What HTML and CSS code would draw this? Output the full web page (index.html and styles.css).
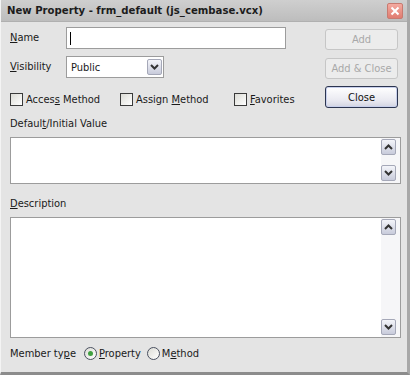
FILE: index.html
```html
<!DOCTYPE html>
<html lang="en">
<head>
    <meta charset="UTF-8">
    <title>New Property</title>
    <link rel="stylesheet" href="styles.css">
</head>
<body>
    <div class="window">
        <div class="titlebar">
            <span class="title">New Property - frm_default (js_cembase.vcx)</span>
            <span class="close-box">
                <svg width="10" height="10" viewBox="0 0 10 10"><path d="M1.5 1.5 L8.5 8.5 M8.5 1.5 L1.5 8.5" stroke="#fff" stroke-width="2"/></svg>
            </span>
        </div>

        <div class="content">
            <div class="top">
                <div class="fields">
                    <div class="row">
                        <label class="lbl"><u>N</u>ame</label>
                        <div class="textbox name-box"><span class="caret"></span></div>
                    </div>
                    <div class="row">
                        <label class="lbl"><u>V</u>isibility</label>
                        <div class="textbox combo">
                            <span class="combo-text">Public</span>
                            <span class="sbtn combo-btn">
                                <svg width="9" height="6" viewBox="0 0 9 6"><path d="M1 1 L4.5 4.5 L8 1" stroke="#333" stroke-width="2" fill="none"/></svg>
                            </span>
                        </div>
                    </div>
                    <div class="row checks">
                        <label class="check"><span class="box"></span><span>Acces<u>s</u> Method</span></label>
                        <label class="check"><span class="box"></span><span>Assign <u>M</u>ethod</span></label>
                        <label class="check"><span class="box"></span><span><u>F</u>avorites</span></label>
                    </div>
                </div>
                <div class="buttons">
                    <button class="btn" disabled>Add</button>
                    <button class="btn" disabled>Add &amp; Close</button>
                    <button class="btn default">Close</button>
                </div>
            </div>

            <div class="section-label">Defaul<u>t</u>/Initial Value</div>
            <div class="memo memo-small">
                <div class="scroll">
                    <span class="sbtn"><svg width="9" height="6" viewBox="0 0 9 6"><path d="M1 5 L4.5 1.5 L8 5" stroke="#333" stroke-width="2" fill="none"/></svg></span>
                    <span class="sbtn"><svg width="9" height="6" viewBox="0 0 9 6"><path d="M1 1 L4.5 4.5 L8 1" stroke="#333" stroke-width="2" fill="none"/></svg></span>
                </div>
            </div>

            <div class="section-label desc-label"><u>D</u>escription</div>
            <div class="memo memo-large">
                <div class="scroll">
                    <span class="sbtn"><svg width="9" height="6" viewBox="0 0 9 6"><path d="M1 5 L4.5 1.5 L8 5" stroke="#333" stroke-width="2" fill="none"/></svg></span>
                    <span class="sbtn"><svg width="9" height="6" viewBox="0 0 9 6"><path d="M1 1 L4.5 4.5 L8 1" stroke="#333" stroke-width="2" fill="none"/></svg></span>
                </div>
            </div>

            <div class="member">
                <span class="member-label">Member ty<u>p</u>e</span>
                <label class="radio"><span class="dot checked"></span><span><u>P</u>roperty</span></label>
                <label class="radio"><span class="dot"></span><span>M<u>e</u>thod</span></label>
            </div>
        </div>
    </div>
</body>
</html>
```

FILE: styles.css
```css
/* Dialog window */
body {
    margin: 0;
    padding: 0;
    background-color: #e4e4e4;
    font-family: "DejaVu Sans Condensed", "DejaVu Sans", sans-serif;
    font-size: 11px;
    color: #1a1a1a;
}

.window {
    width: 410px;
    height: 375px;
    box-sizing: border-box;
    border-left: 1px solid #f4f4f4;
    border-right: 3px solid #a8a8a8;
    border-bottom: 3px solid #8c8c8c;
    background-color: #e4e4e4;
    display: flex;
    flex-direction: column;
    overflow: hidden;
}

u {
    text-decoration: underline;
    text-underline-offset: 1px;
}

/* Title bar */
.titlebar {
    flex-shrink: 0;
    height: 21px;
    display: flex;
    align-items: center;
    justify-content: space-between;
    padding: 0 4px 0 6px;
    background: linear-gradient(#cfcfcf, #bdbdbd);
    border-bottom: 1px solid #b0b0b0;
}

.title {
    font-weight: bold;
    font-size: 11.25px;
    color: #1c1c1c;
}

.close-box {
    width: 14px;
    height: 14px;
    border: 1px solid #c87a70;
    border-radius: 2px;
    background: linear-gradient(#f4aaa0, #e07c70);
    display: flex;
    align-items: center;
    justify-content: center;
}

/* Content */
.content {
    flex: 1;
    padding: 5px 6px 0 9px;
    display: flex;
    flex-direction: column;
}

.top {
    display: flex;
    justify-content: space-between;
    flex-shrink: 0;
}

.fields {
    display: flex;
    flex-direction: column;
}

.row {
    height: 29px;
    display: flex;
    align-items: flex-start;
}

.lbl {
    width: 56px;
    line-height: 22px;
}

.textbox {
    height: 22px;
    box-sizing: border-box;
    border: 1px solid #9c9c9c;
    background-color: #fff;
    display: flex;
    align-items: center;
}

.name-box {
    width: 220px;
    padding-left: 3px;
}

.caret {
    width: 1px;
    height: 13px;
    background-color: #000;
}

.combo {
    width: 98px;
    justify-content: space-between;
    padding: 0 1px 0 4px;
}

.combo-btn {
    height: 18px;
}

.sbtn {
    width: 15px;
    height: 16px;
    box-sizing: border-box;
    border: 1px solid #a5a8b8;
    border-radius: 2px;
    background: linear-gradient(#f4f5fa, #c8cbdb);
    display: flex;
    align-items: center;
    justify-content: center;
}

.checks {
    align-items: center;
}

.check {
    display: flex;
    align-items: center;
}

.check:nth-child(1) { width: 110px; }
.check:nth-child(2) { width: 114px; }

.box {
    width: 13px;
    height: 13px;
    margin-right: 3px;
    box-sizing: border-box;
    border: 1px solid #3a3a3a;
    background: linear-gradient(135deg, #dcdcd6, #ffffff);
}

.buttons {
    display: flex;
    flex-direction: column;
    gap: 8px;
    padding-top: 2px;
    margin-right: 3px;
}

.btn {
    width: 73px;
    height: 21px;
    font-family: inherit;
    font-size: 11px;
    border: 1px solid #c6c6c6;
    border-radius: 3px;
    background-color: #ececec;
    color: #a8a8a8;
    padding: 0;
}

.btn.default {
    height: 22px;
    margin-top: -1px;
    border: 1px solid #2c3550;
    color: #111;
    background: linear-gradient(#ffffff, #e8e8f0 70%, #d2d4e2);
    box-shadow: inset 0 0 0 1px #c8d0ec;
}

/* Memo fields */
.section-label {
    flex-shrink: 0;
    height: 21px;
    margin-top: 2px;
    line-height: 16px;
}

.desc-label {
    margin-top: 12px;
}

.memo {
    flex-shrink: 0;
    width: 391px;
    box-sizing: border-box;
    border: 1px solid #9c9c9c;
    background-color: #fff;
    display: flex;
    justify-content: flex-end;
}

.memo-small {
    height: 47px;
}

.memo-large {
    height: 121px;
}

.scroll {
    width: 17px;
    padding: 1px 2px 2px 0;
    display: flex;
    flex-direction: column;
    justify-content: space-between;
    background-color: #f6f6f8;
}

/* Member type */
.member {
    flex-shrink: 0;
    height: 30px;
    display: flex;
    align-items: center;
}

.member-label {
    width: 74px;
}

.radio {
    display: flex;
    align-items: center;
    margin-right: 6px;
}

.dot {
    width: 13px;
    height: 13px;
    margin-right: 2px;
    box-sizing: border-box;
    border: 1px solid #4a5060;
    border-radius: 50%;
    background: linear-gradient(135deg, #dcdcd6, #ffffff);
    display: flex;
    align-items: center;
    justify-content: center;
}

.dot.checked::after {
    content: "";
    width: 5px;
    height: 5px;
    border-radius: 50%;
    background-color: #40a040;
}
```
